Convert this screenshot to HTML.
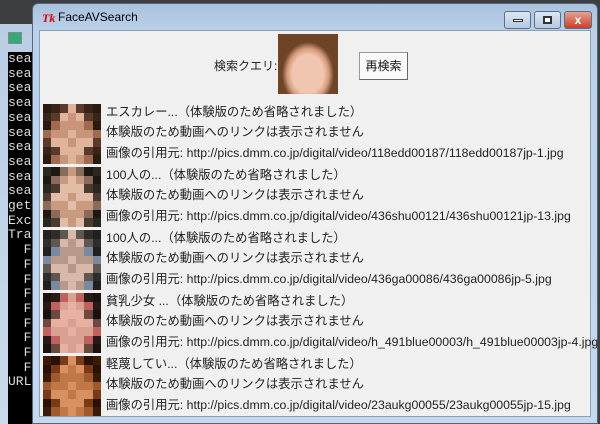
<!DOCTYPE html>
<html><head><meta charset="utf-8"><style>
*{margin:0;padding:0;box-sizing:border-box}
body{width:600px;height:424px;overflow:hidden;background:#3c3e42;position:relative;font-family:"Liberation Sans","Noto Sans CJK JP",sans-serif}
#con{position:absolute;left:0;top:24px;width:40px;height:400px;background:linear-gradient(#b9cde4,#c9daec);}
#conb{position:absolute;left:8px;top:52px;width:30px;height:372px;background:#000;color:#ddd;font-family:"Liberation Mono",monospace;font-size:13px;line-height:14.7px;padding-left:0;white-space:pre}
#win{position:absolute;left:32px;top:3px;width:566px;height:421px;border-radius:6px 6px 0 0;background:linear-gradient(#a9c2dd,#bcd2ea 30px,#c4d8ee);border:1px solid #55657a}
#title{position:absolute;left:40px;top:9px;font-size:12px;color:#000}
#tk{position:absolute;left:9px;top:7px;color:#d00;font-style:italic;font-weight:bold;font-size:12px;font-family:"Liberation Serif",serif}
#client{position:absolute;left:6px;top:26px;width:552px;height:387px;background:#f0f0f0;border:1px solid #8aa0b8}
.btn{position:absolute;top:7px;height:18px;border:1px solid #5a6e88;border-radius:3px;background:linear-gradient(#dbe6f3,#b6c9e0)}
.q{position:absolute;font-size:12px;color:#222}
.row{position:absolute;left:3px;width:58px;height:60px;display:grid;grid-template-columns:repeat(7,1fr);grid-template-rows:repeat(7,1fr)}
.t{position:absolute;left:66px;font-size:12.3px;color:#222;white-space:nowrap;line-height:14px}
</style></head><body>
<div id="con"><div style="position:absolute;left:8px;top:8px;width:14px;height:12px;background:#3a7;border:1px solid #888"></div></div>
<div id="conb">sea
sea
sea
sea
sea
sea
sea
sea
sea
sea
get
Exc
Tra
  F
  F
  F
  F
  F
  F
  F
  F
  F
URL</div>
<div id="win">
<div id="tk">Tk</div><div id="title" style="left:25px;top:6px">FaceAVSearch</div>
<div class="btn" style="left:471px;width:27px"><div style="margin:7px auto;width:10px;height:3px;background:#fff;border:1px solid #333"></div></div>
<div class="btn" style="left:501px;width:27px"><div style="margin:4px auto;width:9px;height:8px;border:2px solid #333;background:#fff"></div></div>
<div class="btn" style="left:531px;width:28px;background:linear-gradient(#e8a090,#c8402a);color:#fff;font-weight:bold;font-size:12px;text-align:center;line-height:16px">x</div>
<div id="client">
<div class="q" style="left:174px;top:26px">検索クエリ:</div>
<div style="position:absolute;left:238px;top:3px;width:60px;height:60px;background:radial-gradient(ellipse 26px 32px at 30px 40px,#f1c6b0 60%,#d49a7c 80%,#6e4326 100%);"></div>
<div style="position:absolute;left:319px;top:21px;width:49px;height:28px;background:#fafafa;border:1px solid #999;border-right-color:#666;border-bottom-color:#666;font-size:12px;text-align:center;line-height:26px;color:#111">再検索</div>
<div id="rows"></div>
</div></div>
<script>
(function(){
var pal=[["#2b1a12","#5a3a2a","#c9957a","#e0b49a","#a06a50","#3a2418"],["#1e1812","#4a3a30","#c89a80","#e2bca4","#8a6a5a","#2a2622"],["#22201e","#605850","#b89888","#d8b8a8","#7a88a0","#302c2a"],["#2a1a16","#6a4a40","#d8a090","#e8b0a0","#c06060","#1a1210"],["#3a1a08","#7a3a18","#c07848","#d89060","#a05a30","#2a1006"]];
var titles=["エスカレー...（体験版のため省略されました）","100人の...（体験版のため省略されました）","100人の...（体験版のため省略されました）","貧乳少女 ...（体験版のため省略されました）","軽蔑してい...（体験版のため省略されました）"];
var urls=["118edd00187/118edd00187jp-1.jpg","436shu00121/436shu00121jp-13.jpg","436ga00086/436ga00086jp-5.jpg","h_491blue00003/h_491blue00003jp-4.jpg","23aukg00055/23aukg00055jp-15.jpg"];
var h="";
for(var i=0;i<5;i++){var y=73+i*63,p=pal[i],cells="";
for(var r=0;r<7;r++)for(var c=0;c<7;c++){var d=Math.abs(c-3)+Math.abs(r-3.5)*0.6;var k=(r*7+c*3+i)%2;var col=d<1.5?p[3-k]:d<2.6?p[2+k]:d<3.6?p[1+k*3]:p[k?5:0];cells+='<div style="background:'+col+'"></div>';}
h+='<div class="row" style="top:'+y+'px">'+cells+'</div>';
h+='<div class="t" style="top:'+(y+1)+'px">'+titles[i]+'</div>';
h+='<div class="t" style="top:'+(y+21)+'px">体験版のため動画へのリンクは表示されません</div>';
h+='<div class="t" style="top:'+(y+42)+'px">画像の引用元: http://pics.dmm.co.jp/digital/video/'+urls[i]+'</div>';}
document.getElementById("rows").innerHTML=h;
})();
</script>
</body></html>
